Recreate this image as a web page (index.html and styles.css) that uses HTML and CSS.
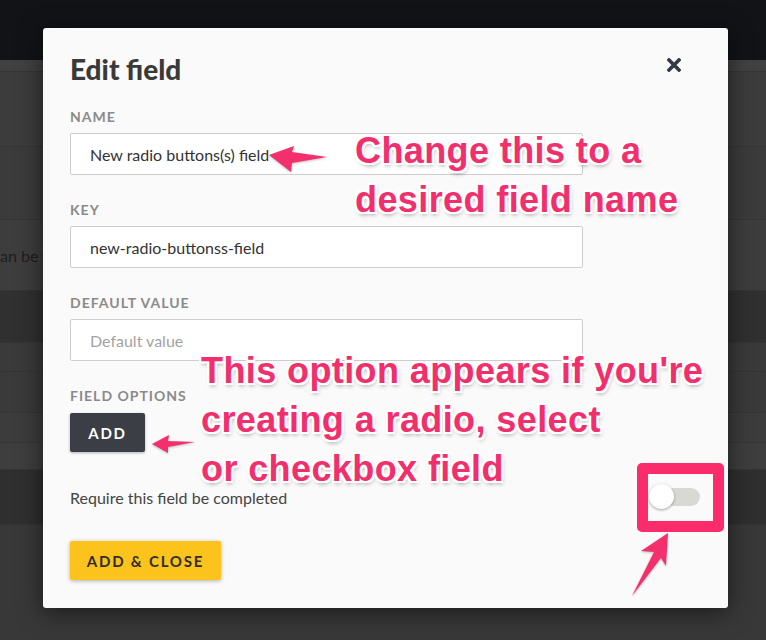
FILE: index.html
```html
<!DOCTYPE html>
<html>
<head>
    <title>Edit field</title>
    <link rel="stylesheet" href="styles.css">
</head>
<body>
    <div class="backdrop">
        <div class="topbar"></div>
        <div class="row r1"></div>
        <div class="row r2"></div>
        <div class="row r3"></div>
        <div class="row r4"><span class="bg-text">an be viewed</span></div>
        <div class="row r5"></div>
        <div class="row r6"></div>
        <div class="row r7"></div>
        <div class="row r8"></div>
        <div class="row r9"></div>
        <div class="row r10"></div>
        <div class="row r11"></div>
    </div>

    <div class="modal">
        <div class="modal-head">
            <h2 class="modal-title">Edit field</h2>
            <svg class="close" width="14" height="14" viewBox="0 0 14 14">
                <path d="M2 2 L12 12 M12 2 L2 12" stroke="#363b43" stroke-width="3.6" stroke-linecap="square"/>
            </svg>
        </div>

        <div class="field">
            <div class="label">NAME</div>
            <div class="input">New radio buttons(s) field</div>
        </div>
        <div class="field">
            <div class="label">KEY</div>
            <div class="input">new-radio-buttonss-field</div>
        </div>
        <div class="field">
            <div class="label">DEFAULT VALUE</div>
            <div class="input placeholder">Default value</div>
        </div>
        <div class="options">
            <div class="label">FIELD OPTIONS</div>
            <button class="btn-dark">ADD</button>
        </div>

        <div class="require-row">
            <span>Require this field be completed</span>
            <div class="toggle">
                <div class="track"></div>
                <div class="knob"></div>
            </div>
        </div>

        <button class="btn-yellow">ADD &amp; CLOSE</button>
    </div>

    <!-- annotations -->
    <div class="note note-name">Change this to a<br>desired field name</div>
    <div class="note note-options">This option appears if you're<br>creating a radio, select<br>or checkbox field</div>
    <div class="pink-box"></div>
    <svg class="arrows" width="766" height="640" viewBox="0 0 766 640">
        <polygon points="269,155 294,146 292,152 327,157 292,163 291,172" fill="#f42f6d"/>
        <polygon points="152,444 169,435 168,441 195,442 168,447 168,453" fill="#f42f6d"/>
        <polygon points="668,533 666,566 661,558 632,596 654,552 641,551" fill="#f42f6d"/>
    </svg>
</body>
</html>
```

FILE: styles.css
```css
body {
    margin: 0;
    width: 766px;
    height: 640px;
    overflow: hidden;
    font-family: Lato, "Noto Sans", sans-serif;
    background: #393939;
    position: relative;
}
.backdrop {
    display: flex;
    flex-direction: column;
}
.topbar { height: 60px; background: #111317; }
.row { border-bottom: 1px solid #353535; }
.r1 { height: 11px; background: #414141; }
.r2 { height: 74px; background: #3c3c3c; }
.r3 { height: 72px; background: #3b3b3b; }
.r4 { height: 70px; background: #3d3d3d; display: flex; align-items: center; }
.r5 { height: 51px; background: #303030; }
.r6 { height: 28px; background: #3a3a3a; }
.r7 { height: 40px; background: #3a3a3a; }
.r8 { height: 29px; background: #3c3c3c; }
.r9 { height: 26px; background: #3e3e3e; }
.r10 { height: 54px; background: #2f2f2f; }
.r11 { height: 120px; background: #383838; border-bottom: none; }
.bg-text {
    width: 43px;
    overflow: hidden;
    font-size: 16px;
    color: #1d1d1d;
    white-space: nowrap;
}

.modal {
    position: absolute;
    left: 43px;
    top: 28px;
    width: 685px;
    height: 580px;
    box-sizing: border-box;
    padding: 25px 28px 0 27px;
    background: #fafafa;
    border-radius: 3px;
    box-shadow: 0 4px 24px rgba(0,0,0,0.55);
}
.modal-head {
    display: flex;
    justify-content: space-between;
    align-items: flex-start;
    margin-bottom: 23px;
}
.modal-title {
    margin: 0;
    font-size: 28px;
    line-height: 32px;
    font-weight: 900;
    color: #3a3a3a;
}
.close {
    margin-top: 5px;
    margin-right: 19px;
}
.field {
    margin-bottom: 26px;
}
.label {
    font-size: 14px;
    line-height: 17px;
    font-weight: 700;
    letter-spacing: 1px;
    color: #8a8a8a;
    margin-bottom: 8px;
}
.input {
    width: 513px;
    height: 42px;
    box-sizing: border-box;
    border: 1px solid #cdcdcd;
    border-radius: 2px;
    background: #fff;
    padding-left: 19px;
    display: flex;
    align-items: center;
    font-size: 16px;
    color: #333;
}
.placeholder {
    color: #a3a3a3;
}
.options .label {
    margin-bottom: 9px;
}
button {
    font-family: Lato, "Noto Sans", sans-serif;
    font-weight: 700;
    font-size: 15px;
    letter-spacing: 1.8px;
    border: none;
    border-radius: 2px;
    height: 39px;
    padding: 0;
    cursor: pointer;
}
.btn-dark {
    display: block;
    width: 75px;
    background: #3b3e45;
    color: #fff;
    box-shadow: 0 1px 3px rgba(0,0,0,0.3);
}
.require-row {
    display: flex;
    justify-content: space-between;
    align-items: center;
    height: 26px;
    margin-top: 32px;
    margin-bottom: 31px;
    font-size: 16px;
    color: #444;
}
.toggle {
    position: relative;
    width: 51px;
    height: 26px;
}
.track {
    position: absolute;
    left: 15px;
    top: 4px;
    width: 36px;
    height: 18px;
    border-radius: 9px;
    background: #d8d8d5;
}
.knob {
    position: absolute;
    left: 0;
    top: 0;
    width: 25px;
    height: 25px;
    border-radius: 50%;
    background: #fff;
    box-shadow: 0 1px 3px rgba(0,0,0,0.35);
}
.btn-yellow {
    display: block;
    width: 151px;
    background: #fcc31c;
    color: #2e2e2e;
    box-shadow: 0 1px 4px rgba(0,0,0,0.3);
}

.note {
    position: absolute;
    font-family: "Liberation Sans", Arial, sans-serif;
    font-weight: 700;
    font-size: 36px;
    line-height: 49px;
    letter-spacing: 0.4px;
    color: #f22f6d;
    white-space: nowrap;
    text-shadow:
        2px 0 0 #fff, -2px 0 0 #fff, 0 2px 0 #fff, 0 -2px 0 #fff,
        2px 2px 0 #fff, -2px -2px 0 #fff, 2px -2px 0 #fff, -2px 2px 0 #fff,
        1px 3px 4px rgba(0,0,0,0.35);
}
.note-name {
    left: 355px;
    top: 126px;
}
.note-options {
    left: 201px;
    top: 346px;
}
.pink-box {
    position: absolute;
    left: 637px;
    top: 463px;
    width: 87px;
    height: 69px;
    box-sizing: border-box;
    border: 11px solid #fb2c6b;
    border-radius: 5px;
}
.arrows {
    position: absolute;
    left: 0;
    top: 0;
    pointer-events: none;
    filter: drop-shadow(0 1px 1px rgba(0,0,0,0.25));
}
```
